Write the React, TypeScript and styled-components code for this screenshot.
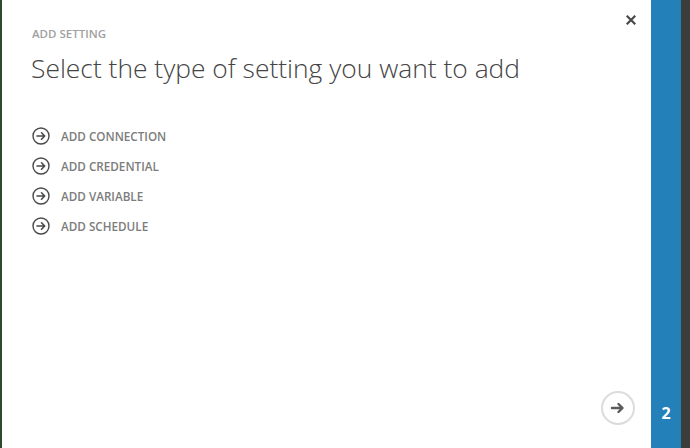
import React from "react";
import styled, { createGlobalStyle } from "styled-components";

const GlobalStyle = createGlobalStyle`
  html, body {
    margin: 0;
    padding: 0;
    background: #ffffff;
  }
  body {
    font-family: "Open Sans", "Noto Sans", sans-serif;
  }
`;

const Frame = styled.div`
  display: flex;
  width: 690px;
  height: 448px;
  overflow: hidden;
`;

const LeftEdge = styled.div`
  width: 2px;
  background: #2e4a2c;
`;

const Panel = styled.div`
  position: relative;
  flex: 1;
  display: flex;
  flex-direction: column;
  padding: 26px 30px 22px 30px;
  background: #ffffff;
`;

const Eyebrow = styled.div`
  font-size: 11.5px;
  font-weight: 600;
  color: #a0a0a0;
  line-height: 16px;
`;

const Title = styled.h1`
  margin: 9px 0 0 -1px;
  font-family: "Open Sans", sans-serif;
  font-size: 26.4px;
  font-weight: 300;
  color: #444444;
  line-height: 34px;
`;

const OptionList = styled.ul`
  list-style: none;
  margin: 42px 0 0 0;
  padding: 0;
  display: flex;
  flex-direction: column;
  gap: 12px;
`;

const Option = styled.li`
  display: flex;
  align-items: center;
  gap: 11px;
  height: 18px;
  cursor: pointer;
`;

const OptionLabel = styled.span`
  font-size: 11.7px;
  font-weight: 600;
  color: #7c7c7c;
`;

const CloseButton = styled.button`
  position: absolute;
  top: 14px;
  right: 14px;
  width: 12px;
  height: 12px;
  padding: 0;
  border: none;
  background: transparent;
  display: flex;
  align-items: center;
  justify-content: center;
  cursor: pointer;
`;

const Footer = styled.div`
  margin-top: auto;
  display: flex;
  justify-content: flex-end;
  margin-right: -14px;
  margin-bottom: 1px;
`;

const NextButton = styled.button`
  width: 34px;
  height: 34px;
  padding: 0;
  border-radius: 50%;
  border: 2px solid #dcdcdc;
  background: #ffffff;
  display: flex;
  align-items: center;
  justify-content: center;
  cursor: pointer;
`;

const StepBar = styled.div`
  width: 30px;
  background: #2380b9;
  display: flex;
  flex-direction: column;
  justify-content: flex-end;
  align-items: center;
  padding-bottom: 24px;
  box-sizing: border-box;
`;

const StepNumber = styled.span`
  font-family: "Open Sans", sans-serif;
  font-size: 16px;
  font-weight: 700;
  color: #ffffff;
`;

const RightEdge = styled.div`
  width: 9px;
  background: #3a3d3a;
`;

// small outlined circle with an arrow, used in front of each option
function CircleArrow() {
  return (
    <svg width="18" height="18" viewBox="0 0 18 18">
      <circle cx="9" cy="9" r="8" fill="none" stroke="#4a4a4a" strokeWidth="1.4" />
      <path
        d="M5 9h7.5M9.5 5.8L12.7 9l-3.2 3.2"
        fill="none"
        stroke="#4a4a4a"
        strokeWidth="1.6"
        strokeLinecap="round"
        strokeLinejoin="round"
      />
    </svg>
  );
}

const options = [
  "ADD CONNECTION",
  "ADD CREDENTIAL",
  "ADD VARIABLE",
  "ADD SCHEDULE",
];

function App() {
  return (
    <>
      <GlobalStyle />
      <Frame>
        <LeftEdge />
        <Panel>
          <CloseButton aria-label="close">
            <svg width="10" height="10" viewBox="0 0 10 10">
              <path
                d="M1.5 1.5l7 7M8.5 1.5l-7 7"
                stroke="#4a4a4a"
                strokeWidth="2.2"
                strokeLinecap="square"
              />
            </svg>
          </CloseButton>
          <Eyebrow>ADD SETTING</Eyebrow>
          <Title>Select the type of setting you want to add</Title>
          <OptionList>
            {options.map((o) => (
              <Option key={o}>
                <CircleArrow />
                <OptionLabel>{o}</OptionLabel>
              </Option>
            ))}
          </OptionList>
          <Footer>
            <NextButton aria-label="next">
              <svg width="16" height="14" viewBox="0 0 16 14">
                <path
                  d="M2 7h10M8.5 3l4 4-4 4"
                  fill="none"
                  stroke="#5a5a5a"
                  strokeWidth="2.4"
                  strokeLinecap="round"
                  strokeLinejoin="round"
                />
              </svg>
            </NextButton>
          </Footer>
        </Panel>
        <StepBar>
          <StepNumber>2</StepNumber>
        </StepBar>
        <RightEdge />
      </Frame>
    </>
  );
}

export default App;
